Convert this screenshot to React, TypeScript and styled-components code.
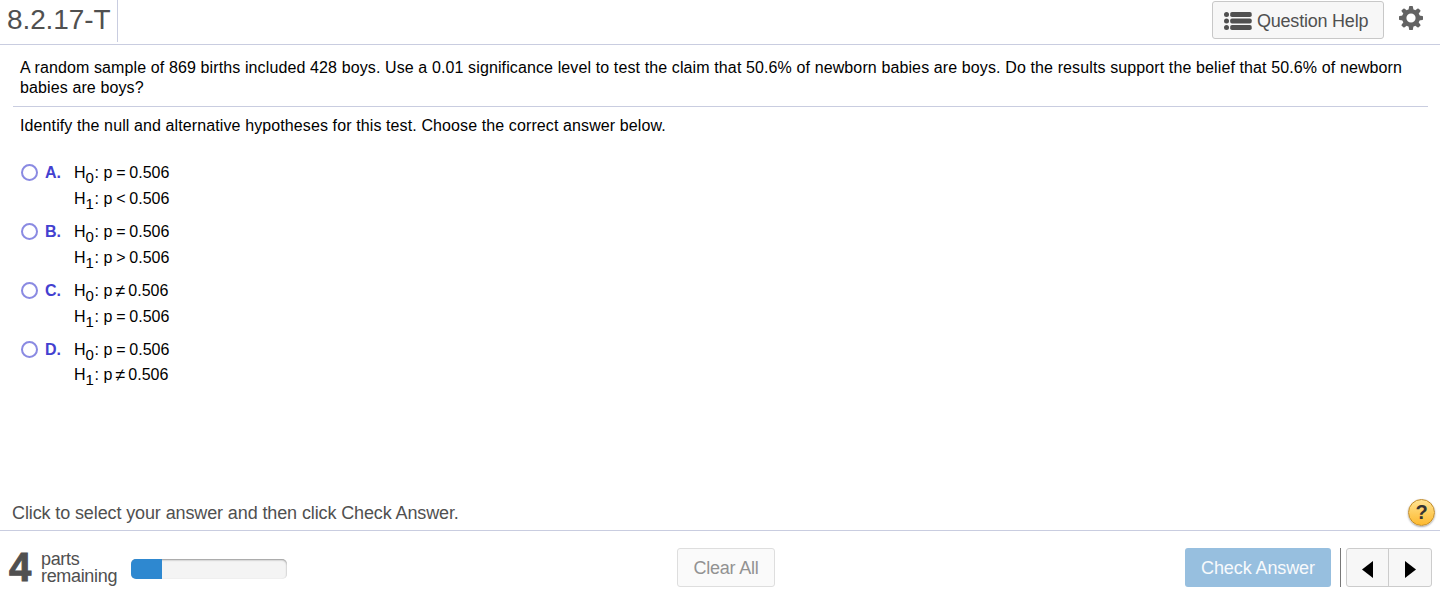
import { useState } from "react";
import styled, { createGlobalStyle } from "styled-components";

const GlobalStyle = createGlobalStyle`
  * {
    box-sizing: border-box;
  }
  body {
    margin: 0;
    background: #fff;
    font-family: "Liberation Sans", Arial, Helvetica, sans-serif;
    color: #000;
    overflow: hidden;
  }
  button {
    font-family: inherit;
    padding: 0;
    cursor: pointer;
  }
`;

const Page = styled.div`
  display: flex;
  flex-direction: column;
  width: 100%;
  height: 605px;
`;

const Header = styled.header`
  display: flex;
  justify-content: space-between;
  height: 45px;
  border-bottom: 1px solid #c9cde0;
`;

const ExerciseTitle = styled.h1`
  width: 118px;
  height: 42px;
  margin: 0;
  padding-left: 7px;
  border-right: 1px solid #c9cde0;
  color: #505050;
  font-size: 28px;
  font-weight: 400;
  line-height: 39px;
  letter-spacing: -0.1px;
  white-space: nowrap;
`;

const HeaderTools = styled.div`
  display: flex;
  align-items: flex-start;
  padding: 1px 17px 0 0;
`;

const HelpButton = styled.button`
  display: flex;
  align-items: center;
  gap: 5px;
  width: 172px;
  height: 38px;
  padding: 2px 0 0 11px;
  border: 1px solid #c8c8c8;
  border-radius: 3px;
  background: #f7f7f7;
  color: #505050;
  font-size: 18px;
  letter-spacing: -0.22px;
  white-space: nowrap;
`;

const GearButton = styled.button`
  display: flex;
  margin: 5px 0 0 15px;
  border: none;
  background: none;
`;

const Main = styled.main`
  flex: 1;
  display: flex;
  flex-direction: column;
  padding: 0 12px 0 13px;
`;

const Question = styled.p`
  height: 62px;
  margin: 0;
  padding: 13px 0 0 7px;
  border-bottom: 1px solid #c9cde0;
  font-size: 16px;
  line-height: 20px;
  letter-spacing: 0.116px;
`;

const Prompt = styled.p`
  margin: 0;
  padding: 9px 0 0 7px;
  font-size: 16px;
  line-height: 20px;
  letter-spacing: 0.108px;
`;

const Options = styled.div`
  display: flex;
  flex-direction: column;
  padding: 26px 0 0 8px;
`;

const Option = styled.label`
  display: grid;
  grid-template-columns: 24px 29px auto;
  height: 59px;
  font-size: 16px;
  line-height: 22px;
  cursor: pointer;
`;

const Radio = styled.input`
  appearance: none;
  width: 17px;
  height: 17px;
  margin: 2px 0 0;
  border: 2px solid #8a8ae2;
  border-radius: 50%;
  background: #fff;
  &:checked {
    box-shadow: inset 0 0 0 3px #fff;
    background: #4340d0;
  }
`;

const OptionLetter = styled.span`
  color: #4340d0;
  font-weight: 700;
`;

const Hypothesis = styled.div<{ $tight?: boolean }>`
  display: flex;
  height: ${(props) => (props.$tight ? "25px" : "26px")};
  white-space: pre;
`;

const Sub = styled.span`
  width: 9px;
  padding-top: 5px;
  font-size: 15px;
`;

const Relation = styled.span<{ $wide?: boolean }>`
  width: ${(props) => (props.$wide ? "16px" : "17px")};
  font-size: ${(props) => (props.$wide ? "18px" : "16px")};
  text-align: center;
`;

const Instructions = styled.div`
  display: flex;
  align-items: center;
  justify-content: space-between;
  height: 36px;
  padding: 1px 5px 0 12px;
  color: #505050;
  font-size: 18px;
  letter-spacing: -0.115px;
`;

const InstructionText = styled.span`
  padding-top: 2px;
`;

const HintButton = styled.button`
  width: 27px;
  height: 27px;
  border: 1px solid #c08a28;
  border-radius: 50%;
  background: linear-gradient(#ffe391, #fdb92e);
  box-shadow: 0 1px 2px rgba(0, 0, 0, 0.35);
  color: #333;
  font-size: 20px;
  font-weight: 700;
  line-height: 25px;
`;

const Footer = styled.footer`
  display: grid;
  grid-template-columns: 669px 98px 1fr;
  height: 75px;
  padding: 17px 8px 0;
  border-top: 1px solid #c9cde0;
`;

const Progress = styled.div`
  display: flex;
  height: 40px;
  color: #505050;
`;

const PartCount = styled.span`
  width: 33px;
  padding-left: 1px;
  font-size: 40px;
  font-weight: 700;
  line-height: 39px;
  -webkit-text-stroke: 1px #505050;
`;

const PartLabel = styled.span`
  width: 90px;
  padding-top: 3px;
  font-size: 18px;
  line-height: 17px;
  letter-spacing: -0.33px;
`;

const ProgressTrack = styled.div`
  width: 156px;
  height: 20px;
  margin-top: 11px;
  border-radius: 5px;
  background: #f4f4f4;
  box-shadow: inset 0 1px 2px rgba(0, 0, 0, 0.4);
  overflow: hidden;
`;

const ProgressFill = styled.div`
  height: 100%;
  background: #2e88d0;
`;

const ClearButton = styled.button`
  height: 39px;
  padding-top: 2px;
  border: 1px solid #dedede;
  border-radius: 3px;
  background: #fafafa;
  color: #929292;
  font-size: 18px;
  letter-spacing: -0.2px;
`;

const Actions = styled.div`
  display: flex;
  justify-content: flex-end;
`;

const CheckButton = styled.button`
  width: 146px;
  height: 39px;
  padding-top: 2px;
  border: none;
  border-radius: 3px;
  background: #97bfdf;
  color: #f7fafc;
  font-size: 18px;
  letter-spacing: -0.1px;
`;

const Divider = styled.div`
  width: 1px;
  height: 39px;
  margin: 0 5px 0 9px;
  background: #777;
`;

const PartNav = styled.div`
  display: grid;
  grid-template-columns: 41px 43px;
  width: 86px;
  height: 39px;
  border: 1px solid #ccc;
  border-radius: 3px;
  background: #f7f7f7;
`;

const NavButton = styled.button`
  display: flex;
  align-items: center;
  justify-content: center;
  padding: 4px 0 0;
  border: none;
  background: none;
  & + & {
    border-left: 1px solid #ccc;
  }
`;

const ListIcon = () => (
  <svg width="28" height="18" viewBox="0 0 28 18" fill="#505050">
    {[2.5, 9, 15.5].map((y) => (
      <g key={y}>
        <circle cx="2.5" cy={y} r="2.5" />
        <rect x="6.2" y={y - 2.5} width="21.5" height="5" rx="1.8" />
      </g>
    ))}
  </svg>
);

const GearIcon = () => (
  <svg width="24" height="24" viewBox="-12 -12 24 24" fill="#636363">
    <circle r="6.8" fill="none" stroke="#636363" strokeWidth="4.4" />
    {[0, 45, 90, 135, 180, 225, 270, 315].map((angle) => (
      <path
        key={angle}
        d="M-2.5-8L-1.9-11.4Q-1.8-12-1.2-12H1.2Q1.8-12 1.9-11.4L2.5-8Z"
        transform={`rotate(${angle})`}
      />
    ))}
  </svg>
);

const options = [
  { letter: "A", relations: ["=", "<"] },
  { letter: "B", relations: ["=", ">"] },
  { letter: "C", relations: ["≠", "="] },
  { letter: "D", relations: ["=", "≠"] },
];

const App = () => {
  const [selected, setSelected] = useState<string | null>(null);
  const progress = 20;

  return (
    <>
      <GlobalStyle />
      <Page>
        <Header>
          <ExerciseTitle>8.2.17-T</ExerciseTitle>
          <HeaderTools>
            <HelpButton>
              <ListIcon />
              Question Help
            </HelpButton>
            <GearButton aria-label="Settings">
              <GearIcon />
            </GearButton>
          </HeaderTools>
        </Header>
        <Main>
          <Question>
            A random sample of 869 births included 428 boys. Use a 0.01
            significance level to test the claim that 50.6% of newborn babies
            are boys. Do the results support the belief that 50.6% of newborn
            babies are boys?
          </Question>
          <Prompt>
            Identify the null and alternative hypotheses for this test. Choose
            the correct answer below.
          </Prompt>
          <Options>
            {options.map(({ letter, relations }) => (
              <Option key={letter}>
                <Radio
                  type="radio"
                  name="answer"
                  checked={selected === letter}
                  onChange={() => setSelected(letter)}
                />
                <OptionLetter>{letter}.</OptionLetter>
                <div>
                  {relations.map((relation, index) => (
                    <Hypothesis key={index} $tight={letter === "D"}>
                      H<Sub>{index}</Sub>
                      {": p"}
                      <Relation $wide={relation === "≠"}>{relation}</Relation>
                      0.506
                    </Hypothesis>
                  ))}
                </div>
              </Option>
            ))}
          </Options>
        </Main>
        <Instructions>
          <InstructionText>
            Click to select your answer and then click Check Answer.
          </InstructionText>
          <HintButton aria-label="Help">?</HintButton>
        </Instructions>
        <Footer>
          <Progress>
            <PartCount>4</PartCount>
            <PartLabel>
              parts
              <br />
              remaining
            </PartLabel>
            <ProgressTrack>
              <ProgressFill style={{ width: `${progress}%` }} />
            </ProgressTrack>
          </Progress>
          <ClearButton onClick={() => setSelected(null)}>Clear All</ClearButton>
          <Actions>
            <CheckButton>Check Answer</CheckButton>
            <Divider />
            <PartNav>
              <NavButton aria-label="Previous">
                <svg width="11" height="17" viewBox="0 0 11 17">
                  <path d="M11 0V17L0 8.5Z" />
                </svg>
              </NavButton>
              <NavButton aria-label="Next">
                <svg width="11" height="17" viewBox="0 0 11 17">
                  <path d="M0 0V17L11 8.5Z" />
                </svg>
              </NavButton>
            </PartNav>
          </Actions>
        </Footer>
      </Page>
    </>
  );
};

export default App;
